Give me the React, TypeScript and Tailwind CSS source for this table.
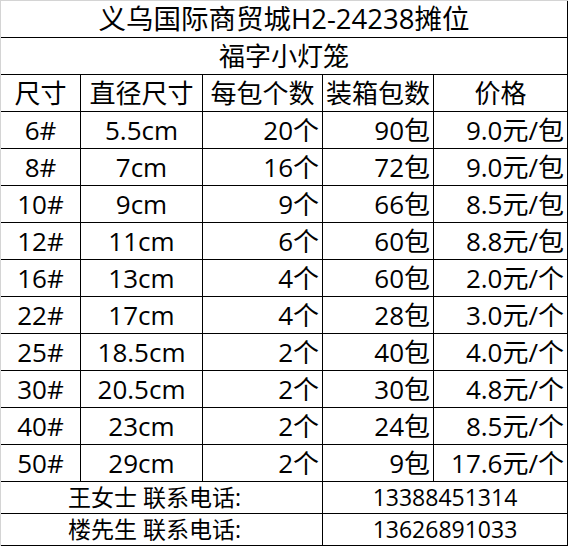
import React from 'react'

type Row = [string, string, string, string, string]

const rows: Row[] = [
  ['6#', '5.5cm', '20个', '90包', '9.0元/包'],
  ['8#', '7cm', '16个', '72包', '9.0元/包'],
  ['10#', '9cm', '9个', '66包', '8.5元/包'],
  ['12#', '11cm', '6个', '60包', '8.8元/包'],
  ['16#', '13cm', '4个', '60包', '2.0元/个'],
  ['22#', '17cm', '4个', '28包', '3.0元/个'],
  ['25#', '18.5cm', '2个', '40包', '4.0元/个'],
  ['30#', '20.5cm', '2个', '30包', '4.8元/个'],
  ['40#', '23cm', '2个', '24包', '8.5元/个'],
  ['50#', '29cm', '2个', '9包', '17.6元/个'],
]

const contacts = [
  ['王女士 联系电话:', '13388451314'],
  ['楼先生 联系电话:', '13626891033'],
]

const cell = 'bg-white flex items-center whitespace-nowrap leading-none'

export default function App() {
  return (
    <div className="w-[568px] h-[546px] bg-white border-t border-l border-[#d4d4d4] font-['Open_Sans','Noto_Sans_CJK_SC',sans-serif] text-black text-[26px]">
      <div className="grid grid-cols-[79px_121px_119px_110px_133px] grid-rows-[repeat(13,36px)_31px_31px] gap-px bg-black border-r border-b border-black">
        {/* Title */}
        <div className={`${cell} col-span-5 justify-center text-[27.5px]`}>义乌国际商贸城H2-24238摊位</div>
        <div className={`${cell} col-span-5 justify-center`}>福字小灯笼</div>

        {/* Header */}
        <div className={`${cell} justify-center`}>尺寸</div>
        <div className={`${cell} justify-center`}>直径尺寸</div>
        <div className={`${cell} justify-center`}>每包个数</div>
        <div className={`${cell} justify-center`}>装箱包数</div>
        <div className={`${cell} justify-center`}>价格</div>

        {rows.map((r) => (
          <React.Fragment key={r[0]}>
            <div className={`${cell} justify-center`}>{r[0]}</div>
            <div className={`${cell} justify-center`}>{r[1]}</div>
            <div className={`${cell} justify-end pr-[3px]`}>{r[2]}</div>
            <div className={`${cell} justify-end pr-[3px]`}>{r[3]}</div>
            <div className={`${cell} justify-end pr-[3px]`}>{r[4]}</div>
          </React.Fragment>
        ))}

        {/* Contacts */}
        {contacts.map(([label, phone]) => (
          <React.Fragment key={phone}>
            <div className={`${cell} col-span-3 justify-center pr-[14px] text-[23px]`}>{label}</div>
            <div className={`${cell} col-span-2 justify-center text-[23px]`}>{phone}</div>
          </React.Fragment>
        ))}
      </div>
    </div>
  )
}
